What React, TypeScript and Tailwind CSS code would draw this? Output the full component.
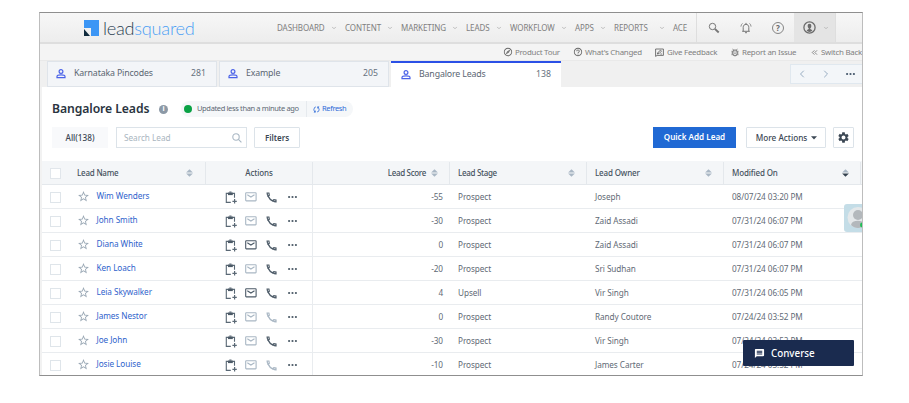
import React from 'react';
import { ChevronDown, ChevronLeft, ChevronRight, ChevronsLeft } from 'lucide-react';
import { MdMessage, MdOutlineExplore, MdHelpOutline, MdSettings, MdStarBorder, MdSync } from 'react-icons/md';

const navItems = [
  { label: 'DASHBOARD', width: 'w-[68px]' },
  { label: 'CONTENT', width: 'w-[56px]' },
  { label: 'MARKETING', width: 'w-[65px]' },
  { label: 'LEADS', width: 'w-[44px]' },
  { label: 'WORKFLOW', width: 'w-[65px]' },
  { label: 'APPS', width: 'w-[39px]' },
  { label: 'REPORTS', width: 'w-[59px]' },
];

const leads = [
  { name: 'Wim Wenders', score: '-55', stage: 'Prospect', owner: 'Joseph', date: '08/07/24 03:20 PM', mail: false, phone: true },
  { name: 'John Smith', score: '-30', stage: 'Prospect', owner: 'Zaid Assadi', date: '07/31/24 06:07 PM', mail: false, phone: true },
  { name: 'Diana White', score: '0', stage: 'Prospect', owner: 'Zaid Assadi', date: '07/31/24 06:07 PM', mail: true, phone: true },
  { name: 'Ken Loach', score: '-20', stage: 'Prospect', owner: 'Sri Sudhan', date: '07/31/24 06:07 PM', mail: false, phone: true },
  { name: 'Leia Skywalker', score: '4', stage: 'Upsell', owner: 'Vir Singh', date: '07/31/24 06:05 PM', mail: true, phone: true },
  { name: 'James Nestor', score: '0', stage: 'Prospect', owner: 'Randy Coutore', date: '07/24/24 03:52 PM', mail: false, phone: false },
  { name: 'Joe John', score: '-30', stage: 'Prospect', owner: 'Vir Singh', date: '07/24/24 03:52 PM', mail: false, phone: true },
  { name: 'Josie Louise', score: '-10', stage: 'Prospect', owner: 'James Carter', date: '07/24/24 03:52 PM', mail: false, phone: false },
];

const columns = 'grid shrink-0 grid-cols-[164px_107px_137px_137px_137px_137px]';

function Sort({ active = false }: { active?: boolean }) {
  return (
    <svg width="7" height="8" viewBox="0 0 7 8" className="shrink-0">
      <path d="M3.5 0.2 6.9 3.5H0.1z" fill="#a9b7c4" />
      <path d="M3.5 7.8 6.9 4.5H0.1z" fill={active ? '#34424f' : '#a9b7c4'} />
    </svg>
  );
}

function PersonIcon() {
  return (
    <svg width="10" height="10" viewBox="0 0 10 10" fill="none" stroke="#4a62e8" strokeWidth="1.2" className="shrink-0">
      <circle cx="5" cy="2.5" r="1.9" />
      <path d="M1 8.6V7.6C1 6.4 3 5.9 5 5.9s4 .5 4 1.7v1z" />
    </svg>
  );
}

function ClipboardAdd() {
  return (
    <svg width="12" height="13" viewBox="0 0 12 13" fill="none" stroke="#5a6875" className="shrink-0">
      <path d="M5.8 11.4H1.3V2.4h8.2v4.4" strokeWidth="1.1" />
      <path d="M3 1.6h4.8v2.5H3z" fill="#4c5a67" stroke="none" />
      <path d="M4.3 1.1h2.2" strokeWidth="1.2" />
      <path d="M9.6 8.1v4.4M7.4 10.3h4.4" strokeWidth="1.2" />
    </svg>
  );
}

function MailIcon({ on }: { on: boolean }) {
  return (
    <svg width="12" height="10" viewBox="0 0 12 10" fill="none" stroke={on ? '#4c5a67' : '#a9b7c4'} strokeWidth="1.1" className="shrink-0">
      <rect x="0.7" y="0.7" width="10.4" height="8.2" rx="0.6" />
      <path d="M2.3 2.8l3.6 2.2 3.6-2.2" />
    </svg>
  );
}

function PhoneIcon({ on }: { on: boolean }) {
  return (
    <svg width="11" height="11" viewBox="0 0 11 11" fill="none" stroke={on ? '#4c5a67' : '#a9b7c4'} className="shrink-0">
      <path d="M1.1 1h1.8l.4 2.2-1.1 1.1C1.5 3.3 1.1 2.1 1.1 1z" strokeWidth="1.2" />
      <path d="M10 9.9V8.1l-2.2-.4-1.1 1.1c1 .7 2.2 1.1 3.3 1.1z" strokeWidth="1.2" />
      <path d="M2 4C3 6.3 4.6 8 7 9" strokeWidth="1.4" />
    </svg>
  );
}

function Dots({ className = '' }: { className?: string }) {
  return (
    <svg width="11" height="4" viewBox="0 0 11 4" fill="currentColor" className={`shrink-0 ${className}`}>
      <circle cx="2.1" cy="2" r="1.1" />
      <circle cx="5.5" cy="2" r="1.1" />
      <circle cx="8.9" cy="2" r="1.1" />
    </svg>
  );
}

function Tab({ label, count, active = false }: { label: string; count: string; active?: boolean }) {
  return (
    <div
      className={
        active
          ? 'flex h-[26px] w-[170px] items-center border-t-2 border-[#2b50e6] bg-white pr-[10px] pl-[10px]'
          : 'flex h-[26px] w-[170px] items-center border border-[#dfe4ea] bg-[#f3f5f8] pr-[10px] pl-[8px]'
      }
    >
      <PersonIcon />
      <span className="ml-[8px] flex-1 text-[8.8px] tracking-[-0.15px] text-[#5b6672]">{label}</span>
      <span className="text-[8.7px] text-[#66717d]">{count}</span>
    </div>
  );
}

export default function App() {
  return (
    <div className="h-[403px] w-[909px] overflow-hidden bg-white pt-[12px] pl-[39px] font-['Noto_Sans',sans-serif] text-[8px] whitespace-nowrap">
      <div className="relative flex h-[364px] w-[824px] flex-col overflow-hidden border border-t-[#8f8f8f] border-r-[#bdbdbd] border-b-[#8f8f8f] border-l-[#bdbdbd] bg-[#f2f2f2]">
        {/* Top navigation */}
        <header className="flex h-[31px] shrink-0 items-stretch border-b-2 border-[#dedede] bg-linear-to-b from-[#f7f7f7] to-[#ededed] text-[#808080]">
          <div className="flex w-[237px] shrink-0 items-center pt-px pl-[44px]">
            <svg width="15" height="16" viewBox="0 0 15 16">
              <path d="M0 0h15v16H7V8H0z" fill="#3c96f5" />
              <path d="M0 9v7h6z" fill="#0f2a3d" />
            </svg>
            <span className="ml-[4px] font-['Lato',sans-serif] text-[18.2px] leading-[20px] font-light tracking-[-0.25px] text-[#2c4152]">
              lead<span className="text-[#4c9ff4]">squared</span>
            </span>
          </div>
          <nav className="flex w-[419px] shrink-0 items-center pt-px text-[8px] tracking-[-0.08px]">
            {navItems.map((item) => (
              <div key={item.label} className={`flex shrink-0 items-center justify-between ${item.width}`}>
                <span>{item.label}</span>
                <ChevronDown size={6} strokeWidth={3.5} className="mr-[8px] shrink-0 text-[#b3b3b3]" />
              </div>
            ))}
            <span>ACE</span>
          </nav>
          <div className="flex w-[98px] shrink-0 items-center border-l border-[#dedede] pl-[11px]">
            <svg width="12" height="12" viewBox="0 0 12 12" fill="none" stroke="#777" className="shrink-0">
              <circle cx="4.5" cy="4.5" r="3.2" strokeWidth="1" />
              <path d="M6.9 6.9l3.8 3.6" strokeWidth="1.9" />
            </svg>
            <svg width="12" height="12" viewBox="0 0 12 12" fill="none" stroke="#777" strokeWidth="1" className="ml-[20px] shrink-0">
              <path d="M2.2 9.3h7.6M3.2 9.2V5.4C3.2 3.6 4.3 2.3 6 2.3s2.8 1.3 2.8 3.1v3.8M6 2.2V.9M5 10.7h2" />
              <path d="M.9 4.6C1 3.2 1.6 2.1 2.5 1.4M11.1 4.6C11 3.2 10.4 2.1 9.5 1.4" strokeWidth="0.8" />
            </svg>
            <div className="ml-[20px] flex h-[12px] w-[12px] shrink-0 items-center justify-center rounded-full border border-[#858585] text-[8px] leading-none font-bold text-[#666]">
              ?
            </div>
          </div>
          <div className="flex w-[42px] shrink-0 items-center border-r border-[#dedede] bg-[#e4e4e4] pl-[9px]">
            <svg width="13" height="13" viewBox="0 0 13 13" className="shrink-0">
              <circle cx="6.5" cy="6.5" r="5.6" fill="none" stroke="#6b6b6b" strokeWidth="1.3" />
              <ellipse cx="6.5" cy="5" rx="1.9" ry="2.2" fill="#6b6b6b" />
              <path d="M5.7 6.5h1.6v1.6l2.1 1.1c-.7 1.2-1.7 1.7-2.9 1.7s-2.2-.5-2.9-1.7l2.1-1.1z" fill="#6b6b6b" />
            </svg>
            <ChevronDown size={6} strokeWidth={3.5} className="ml-[7px] text-[#b3b3b3]" />
          </div>
        </header>

        {/* Help links */}
        <div className="flex h-[17px] shrink-0 items-center border-b border-[#e9e9e9] bg-[#f4f4f4] pt-px pl-[463px] text-[7.9px] tracking-[-0.25px] text-[#808080]">
          <div className="flex w-[70px] shrink-0 items-center gap-[2px]">
            <MdOutlineExplore size={10} className="text-[#666]" />
            <span>Product Tour</span>
          </div>
          <div className="flex w-[82px] shrink-0 items-center gap-[2px]">
            <MdHelpOutline size={10} className="text-[#666]" />
            <span>What's Changed</span>
          </div>
          <div className="flex w-[76px] shrink-0 items-center gap-[3px]">
            <svg width="9" height="9" viewBox="0 0 9 9" fill="none" stroke="#666" strokeWidth="0.9">
              <path d="M.6 1h7.8v6.4H2.1L.6 8.4z" />
              <path d="M2.3 6l1-2 2.3-1.8.9.9-2.2 2.3zM5.4 6h1.5" />
            </svg>
            <span>Give Feedback</span>
          </div>
          <div className="flex w-[79px] shrink-0 items-center gap-[3px]">
            <svg width="8" height="9" viewBox="0 0 8 9" fill="none" stroke="#666" strokeWidth="1">
              <rect x="1.9" y="2" width="4.2" height="5.8" rx="2" />
              <path
                d="M2.5 2 1.7.8M5.5 2l.8-1.2M.4 3.3h1.5M.4 5h1.5M.4 6.7h1.5M6.1 3.3h1.5M6.1 5h1.5M6.1 6.7h1.5M3.2 4h1.6M3.2 5.7h1.6"
                strokeWidth="0.7"
              />
            </svg>
            <span>Report an Issue</span>
          </div>
          <div className="flex shrink-0 items-center gap-[2px]">
            <ChevronsLeft size={9} className="text-[#666]" />
            <span>Switch Back</span>
          </div>
        </div>

        {/* Tabs */}
        <div className="flex h-[26px] shrink-0 gap-[2px] bg-[#f0f0f0] pl-[7px]">
          <Tab label="Karnataka Pincodes" count="281" />
          <Tab label="Example" count="205" />
          <Tab label="Bangalore Leads" count="138" active />
          <div className="mt-[3px] ml-auto flex h-[20px] w-[72px] items-center border border-r-0 border-[#e0e8ef] bg-[#f3f6f9] pl-[5px] text-[#98adc2]">
            <ChevronLeft size={12} className="shrink-0" />
            <ChevronRight size={12} className="ml-[12px] shrink-0" />
            <Dots className="ml-[13px] text-[#44566a]" />
          </div>
        </div>

        <main className="ml-[2px] flex flex-1 flex-col bg-white">
          {/* Page title */}
          <div className="flex h-[40px] shrink-0 items-center pt-[4px] pl-[10px]">
            <h1 className="w-[107px] pt-px text-[12.2px] font-semibold tracking-[-0.08px] text-[#2a3440]">Bangalore Leads</h1>
            <div className="flex h-[9px] w-[9px] items-center justify-center rounded-full bg-[#8c99a6] text-[7px] font-bold text-white">
              i
            </div>
            <div className="ml-[13px] flex h-[16px] w-[172px] items-center rounded-full bg-[#f5f7f9] pl-[3px] text-[7.5px] tracking-[-0.36px]">
              <div className="h-[8px] w-[8px] rounded-full bg-[#0aa245]" />
              <span className="ml-[5px] w-[109px] text-[#5d6874]">Updated less than a minute ago</span>
              <div className="flex h-full items-center gap-px border-l border-[#e6eaee] pl-[5px] text-[#2f6bd8]">
                <MdSync size={9} className="rotate-45" />
                <span>Refresh</span>
              </div>
            </div>
          </div>

          {/* Toolbar */}
          <div className="flex h-[21px] shrink-0 items-center pl-[10px] text-[8.2px] text-[#3b4754]">
            <div className="flex h-full w-[56px] items-center justify-center bg-[#f8f9fb] pt-px font-medium">All(138)</div>
            <div className="ml-[8px] flex h-full w-[131px] items-center justify-between border border-[#dce3e9] pr-[4px] pl-[7px] text-[#a9b5c0]">
              <span className="pt-px">Search Lead</span>
              <svg width="10" height="10" viewBox="0 0 10 10" fill="none" stroke="#a9b7c4" strokeWidth="1.1">
                <circle cx="4" cy="4" r="3.2" />
                <path d="M6.4 6.4l3 3" />
              </svg>
            </div>
            <button className="ml-[7px] h-full w-[46px] rounded-[1px] border border-[#dce3e9] text-[8px] font-semibold">Filters</button>
            <button className="ml-[353px] h-full w-[83px] bg-[#2069d4] text-[8.1px] font-semibold text-white">Quick Add Lead</button>
            <button className="ml-[10px] flex h-full w-[80px] items-center justify-center gap-[4px] rounded-[1px] border border-[#dce3e9] pt-px pl-px font-medium">
              More Actions
              <svg width="6" height="4" viewBox="0 0 6 4" fill="#3b4754">
                <path d="M0 0.3h6L3 3.6z" />
              </svg>
            </button>
            <button className="ml-[7px] flex h-full w-[21px] items-center justify-center rounded-[1px] border border-[#dce3e9]">
              <MdSettings size={13} />
            </button>
          </div>

          {/* Leads table */}
          <div className={`${columns} mt-[13px] h-[24px] border-b border-[#e4e8ec] bg-[#f4f6f8] pt-px font-medium tracking-[-0.32px] text-[#46525e]`}>
            <div className="flex items-center border-r border-[#e4e8ec] pr-[12px] pl-[8px]">
              <div className="h-[11px] w-[11px] border border-[#e1e6eb] bg-white" />
              <span className="ml-[16px] flex-1 tracking-[-0.22px]">Lead Name</span>
              <Sort />
            </div>
            <div className="flex items-center justify-center border-r border-[#e4e8ec] tracking-[-0.12px]">Actions</div>
            <div className="flex items-center justify-end gap-[5px] border-r border-[#e4e8ec] pr-[11px]">
              Lead Score
              <Sort />
            </div>
            <div className="flex items-center justify-between border-r border-[#e4e8ec] pr-[11px] pl-[8px]">
              Lead Stage
              <Sort />
            </div>
            <div className="flex items-center justify-between border-r border-[#e4e8ec] pr-[11px] pl-[8px] tracking-[-0.15px]">
              Lead Owner
              <Sort />
            </div>
            <div className="flex items-center justify-between border-r border-[#e4e8ec] pr-[11px] pl-[8px] tracking-[-0.15px]">
              Modified On
              <Sort active />
            </div>
          </div>
          {leads.map((lead) => (
            <div key={lead.name} className={`${columns} h-[24px] border-b border-[#e9ecef] text-[8.2px] tracking-[-0.06px] text-[#5f6a75]`}>
              <div className="flex items-center pl-[8px]">
                <div className="mt-[2px] h-[11px] w-[11px] border border-[#dfe5ea]" />
                <MdStarBorder size={13} className="ml-[16px] shrink-0 text-[#9aa8b5]" />
                <span className="ml-[6.5px] pb-px text-[#2f63cc]">{lead.name}</span>
              </div>
              <div className="flex items-center border-r border-[#e9ecef] pt-px pl-[19px]">
                <ClipboardAdd />
                <div className="ml-[8px]">
                  <MailIcon on={lead.mail} />
                </div>
                <div className="ml-[9px]">
                  <PhoneIcon on={lead.phone} />
                </div>
                <Dots className="ml-[10px] text-[#4c5a67]" />
              </div>
              <div className="flex items-center justify-end pt-px pr-[7px]">{lead.score}</div>
              <div className="flex items-center pt-px pl-[8px]">{lead.stage}</div>
              <div className="flex items-center pt-px pl-[8px]">{lead.owner}</div>
              <div className="flex items-center pt-px pl-[8px]">{lead.date}</div>
            </div>
          ))}
        </main>

        {/* Floating widgets */}
        <div className="absolute top-[191px] left-[804px] h-[28px] w-[18px] overflow-hidden rounded-l-[3px] bg-[#c4dde7]">
          <svg width="18" height="28" viewBox="0 0 18 28">
            <circle cx="14" cy="13.5" r="10.5" fill="#e4e8ea" />
            <circle cx="14" cy="11" r="5" fill="#b3b8bc" />
            <path d="M7 21c.5-3 3-4.2 7-4.2s6.500 1.200 7 4.200c-2 2-4 3-7 3s-5-1-7-3z" fill="#b3b8bc" />
            <circle cx="18.5" cy="21" r="2.5" fill="#1fbf55" />
          </svg>
        </div>
        <div className="absolute top-[327px] left-[703px] flex h-[26px] w-[111px] items-center rounded-[1px] bg-[#1a2b4f] pl-[11px] text-white">
          <MdMessage size={11} />
          <span className="ml-[6px] pt-[2px] text-[9.8px] font-medium">Converse</span>
        </div>
      </div>
    </div>
  );
}
